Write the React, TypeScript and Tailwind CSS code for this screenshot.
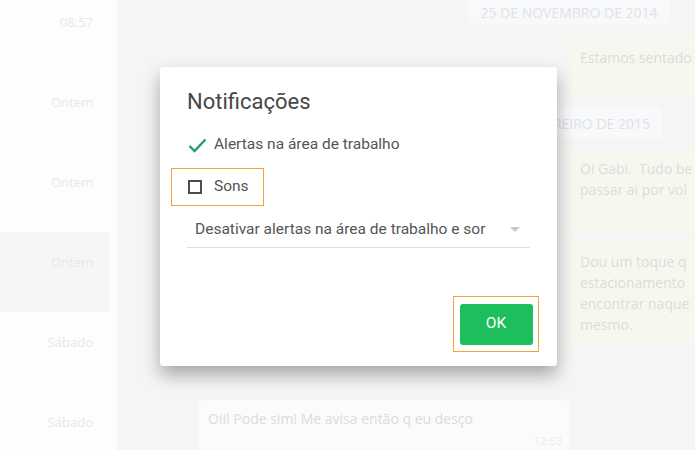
const times = ["08:57", "Ontem", "Ontem", "Ontem", "Sábado", "Sábado"];

function ChatList() {
  return (
    <div className="w-[117px] shrink-0 bg-[#fdfdfd] flex flex-col -mt-[8px]">
      {times.map((t, i) => (
        <div
          key={i}
          className={
            "h-[80px] w-[110px] shrink-0 flex justify-end pr-[17px] pt-[21px] text-[13px] text-[#e8e8e8] " +
            (i === 3 ? "bg-[#f6f6f6]" : "")
          }
        >
          {t}
        </div>
      ))}
    </div>
  );
}

function Conversation() {
  return (
    <div className="flex-1 bg-[#f6f5f4] flex flex-col text-[14px] text-[#dcdcdc]">
      <div className="shrink-0 ml-[351px] w-[202px] h-[24px] rounded-b-[6px] bg-[#f8f9fb] flex items-center justify-center text-[14px] text-[#e0e2e6]">
        25 DE NOVEMBRO DE 2014
      </div>
      <div className="shrink-0 ml-[453px] mt-[13px] h-[58px] bg-[#f6f8ef] px-[10px] pt-[10px] whitespace-nowrap">
        Estamos sentado
      </div>
      <div className="shrink-0 ml-[403px] mt-[12px] w-[142px] h-[32px] rounded-[6px] bg-[#f8f9fb] flex items-center justify-end pr-[12px] text-[14px] text-[#e0e2e6]">
        FEVEREIRO DE 2015
      </div>
      <div className="shrink-0 ml-[453px] mt-[12px] h-[82px] bg-[#f6f8ef] px-[10px] pt-[7px] leading-[21px] whitespace-nowrap">
        <div>Oi Gabi.&nbsp; Tudo be</div>
        <div>passar ai por vol</div>
      </div>
      <div className="shrink-0 ml-[453px] mt-[8px] h-[102px] bg-[#f6f8ef] px-[10px] pt-[10px] leading-[21px] whitespace-nowrap">
        <div>Dou um toque q</div>
        <div>estacionamento</div>
        <div>encontrar naque</div>
        <div>mesmo.</div>
      </div>
      <div className="shrink-0 ml-[81px] mt-[57px] w-[372px] h-[60px] rounded-[6px] bg-[#fbfbfb] px-[10px] pt-[8px] relative">
        <div>Oii! Pode sim! Me avisa então q eu desço</div>
        <div className="absolute right-[8px] top-[33px] text-[11px] text-[#ececec]">12:53</div>
      </div>
    </div>
  );
}

function NotificationsDialog() {
  return (
    <div
      className="absolute left-[160px] top-[67px] w-[397px] h-[299px] bg-white rounded-[3px] shadow-[0_9px_18px_rgba(0,0,0,0.32)] flex flex-col px-[27px] text-[#4a4a4a]"
      style={{ fontFamily: "Roboto, sans-serif" }}
    >
      <div className="mt-[21px] text-[22px] leading-[28px] text-[#474747]">Notificações</div>

      <div className="mt-[18px] flex items-center h-[22px] text-[15.5px] text-[#555]">
        <svg width="19" height="15" viewBox="0 0 19 15" className="mr-[7px] ml-[1px]">
          <path d="M1.5 8 L6.5 13 L17.5 1.5" fill="none" stroke="#1f9e6b" strokeWidth="2.4" />
        </svg>
        Alertas na área de trabalho
      </div>

      <div className="mt-[12px] -ml-[16px] w-[93px] h-[38px] border border-[#f2a33a] flex items-center pl-[16px] text-[15.5px] text-[#555]">
        <div className="w-[14px] h-[14px] border-2 border-[#4d4d4d] mr-[12px]" />
        Sons
      </div>

      <div className="h-[42px] pt-[6px] border-b border-[#e0e0e0] flex items-center pl-[8px] pr-[10px] text-[15.5px] text-[#555]">
        <span className="flex-1 whitespace-nowrap overflow-hidden">Desativar alertas na área de trabalho e sor</span>
        <svg width="10" height="5" viewBox="0 0 10 5" className="ml-[20px]">
          <path d="M0 0 L10 0 L5 5 Z" fill="#c8c8c8" />
        </svg>
      </div>

      <div className="mt-[48px] flex justify-end -mr-[9px]">
        <div className="w-[86px] h-[56px] border border-[#f2a33a] flex items-center justify-center">
          <div className="w-[73px] h-[41px] bg-[#1dbe5c] rounded-[3px] flex items-center justify-center text-white text-[15.5px]">
            OK
          </div>
        </div>
      </div>
    </div>
  );
}

export default function App() {
  return (
    <div
      className="relative w-[695px] h-[450px] overflow-hidden flex bg-[#f6f5f4]"
      style={{ fontFamily: '"Open Sans", sans-serif' }}
    >
      <ChatList />
      <Conversation />
      <NotificationsDialog />
    </div>
  );
}
